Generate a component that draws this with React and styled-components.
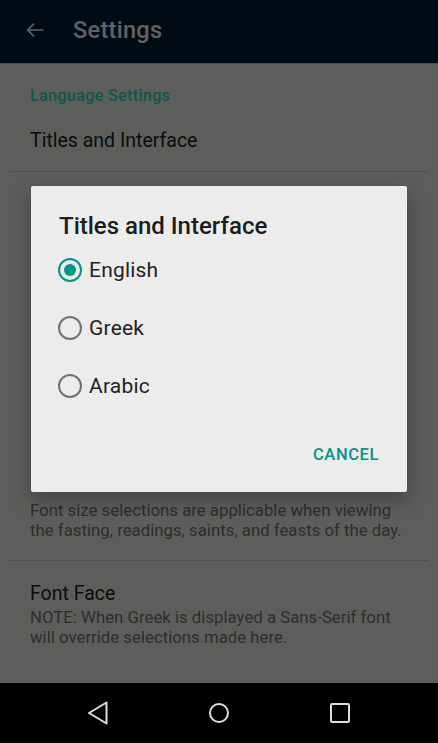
import React, { useState } from 'react';
import styled, { createGlobalStyle } from 'styled-components';

const GlobalStyle = createGlobalStyle`
  html, body {
    margin: 0;
    padding: 0;
    background: #000;
  }
  * {
    box-sizing: border-box;
  }
`;

const Screen = styled.div`
  position: relative;
  width: 438px;
  height: 743px;
  display: flex;
  flex-direction: column;
  overflow: hidden;
  font-family: Roboto, 'Noto Sans', sans-serif;
  background: #f4f6f2;
`;

const Toolbar = styled.header`
  height: 64px;
  flex-shrink: 0;
  display: flex;
  align-items: center;
  padding-left: 22px;
  padding-bottom: 3px;
  background: #031d35;
  border-bottom: 1px solid #c4c8c4;
`;

const BackButton = styled.button`
  width: 26px;
  height: 26px;
  padding: 0;
  border: none;
  background: none;
  display: flex;
  align-items: center;
  justify-content: center;
  color: #fff;
  margin-right: 25px;
`;

const ToolbarTitle = styled.h1`
  margin: 0;
  font-size: 23.5px;
  font-weight: 500;
  color: #fff;
  letter-spacing: 0.3px;
`;

const Content = styled.main`
  flex: 1;
  display: flex;
  flex-direction: column;
`;

const SectionHeader = styled.div`
  padding: 22px 30px 0;
  height: 52px;
  font-size: 16.2px;
  font-weight: 500;
  letter-spacing: 0.3px;
  color: #26e8c4;
`;

const Item = styled.div`
  margin: 0 10px;
  padding: ${(p) => p.$pad};
  padding-left: 20px;
  padding-right: 14px;
  border-bottom: ${(p) => (p.$divider ? '1px solid #cfd2cf' : 'none')};
`;

const ItemTitle = styled.div`
  font-size: 19.5px;
  line-height: 26px;
  color: #222;
`;

const ItemSummary = styled.div`
  font-size: 16.8px;
  line-height: 20px;
  color: #767876;
`;

const FontSizeBody = styled.div`
  height: ${(p) => p.$h}px;
`;

const Scrim = styled.div`
  position: absolute;
  left: 0;
  right: 0;
  top: 0;
  bottom: 60px;
  background: rgba(0, 0, 0, 0.62);
  display: flex;
  align-items: center;
  justify-content: center;
  padding-bottom: 6px;
`;

const Dialog = styled.div`
  width: 376px;
  height: 306px;
  background: #ececec;
  border-radius: 2px;
  box-shadow: 0 8px 20px rgba(0, 0, 0, 0.3);
  display: flex;
  flex-direction: column;
  padding-top: 26px;
`;

const DialogTitle = styled.h2`
  margin: 0 0 1px;
  padding-left: 28px;
  font-size: 24px;
  line-height: 28px;
  font-weight: 500;
  color: #1c1c1c;
`;

const Option = styled.label`
  height: 58px;
  display: flex;
  align-items: center;
  padding-left: 27px;
  cursor: pointer;
`;

const RadioCircle = styled.span`
  width: 24px;
  height: 24px;
  border-radius: 50%;
  border: 2.4px solid ${(p) => (p.$checked ? '#009688' : '#727272')};
  display: flex;
  align-items: center;
  justify-content: center;
  margin-right: 7px;
  &::after {
    content: '';
    width: 12px;
    height: 12px;
    border-radius: 50%;
    background: #009688;
    display: ${(p) => (p.$checked ? 'block' : 'none')};
  }
`;

const OptionText = styled.span`
  font-size: 21px;
  letter-spacing: 0.2px;
  color: #222;
`;

const DialogActions = styled.div`
  flex: 1;
  display: flex;
  justify-content: flex-end;
  align-items: center;
  padding-right: 20px;
  padding-top: 2px;
`;

const TextButton = styled.button`
  border: none;
  background: none;
  padding: 8px;
  font-family: inherit;
  font-size: 16.5px;
  font-weight: 500;
  color: #009688;
  letter-spacing: 0.6px;
`;

const NavBar = styled.nav`
  position: relative;
  height: 60px;
  flex-shrink: 0;
  background: #000;
  display: grid;
  grid-template-columns: repeat(3, 121px);
  justify-content: center;
  align-items: center;
  justify-items: center;
  z-index: 2;
`;

const languages = ['English', 'Greek', 'Arabic'];

const App = () => {
  const [lang, setLang] = useState('English');

  return (
    <Screen>
      <GlobalStyle />
      <Toolbar>
        <BackButton aria-label="Back">
          <svg width="22" height="22" viewBox="0 0 24 24" fill="none" stroke="currentColor" strokeWidth="1.8">
            <path d="M21 12H4M11 5l-7 7 7 7" />
          </svg>
        </BackButton>
        <ToolbarTitle>Settings</ToolbarTitle>
      </Toolbar>
      <Content>
        <SectionHeader>Language Settings</SectionHeader>
        <Item $divider $pad="12px 0 17px">
          <ItemTitle>Titles and Interface</ItemTitle>
        </Item>
        <Item $divider $pad="40px 0 20px">
          <ItemTitle style={{ visibility: 'hidden' }}>Font Size</ItemTitle>
          <FontSizeBody $h={262} />
          <ItemSummary>
            Font size selections are applicable when viewing the fasting, readings, saints, and feasts of the day.
          </ItemSummary>
        </Item>
        <Item $pad="20px 0 0">
          <ItemTitle>Font Face</ItemTitle>
          <ItemSummary>
            NOTE: When Greek is displayed a Sans-Serif font will override selections made here.
          </ItemSummary>
        </Item>
      </Content>
      <Scrim>
        <Dialog>
          <DialogTitle>Titles and Interface</DialogTitle>
          {languages.map((l) => (
            <Option key={l} onClick={() => setLang(l)}>
              <RadioCircle $checked={lang === l} />
              <OptionText>{l}</OptionText>
            </Option>
          ))}
          <DialogActions>
            <TextButton>CANCEL</TextButton>
          </DialogActions>
        </Dialog>
      </Scrim>
      <NavBar>
        <svg width="22" height="24" viewBox="0 0 22 24" fill="none" stroke="#dedede" strokeWidth="2" strokeLinejoin="round">
          <path d="M19.5 1.5v21L2 12z" />
        </svg>
        <svg width="22" height="22" viewBox="0 0 22 22" fill="none" stroke="#dedede" strokeWidth="2">
          <circle cx="11" cy="11" r="9" />
        </svg>
        <svg width="22" height="22" viewBox="0 0 22 22" fill="none" stroke="#dedede" strokeWidth="2">
          <rect x="2" y="2" width="18" height="18" rx="1" />
        </svg>
      </NavBar>
    </Screen>
  );
};

export default App;
